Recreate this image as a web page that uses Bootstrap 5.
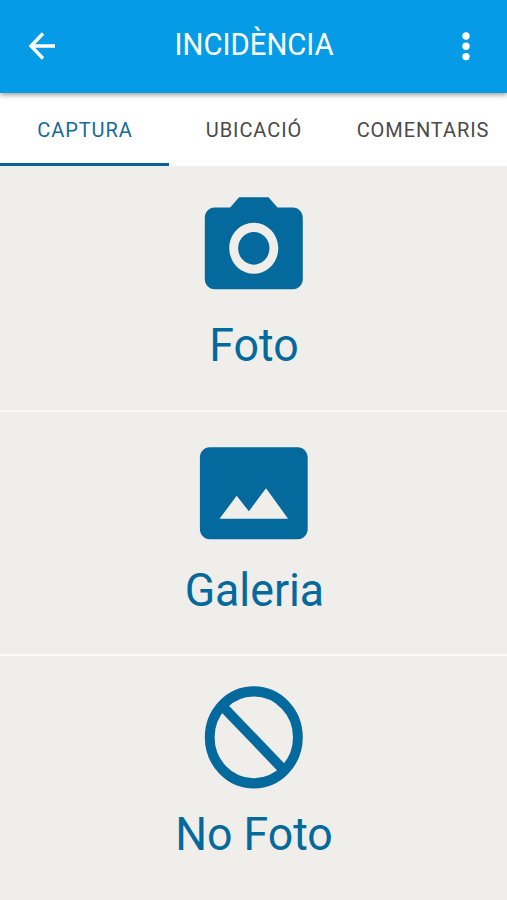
<!DOCTYPE html>
<html lang="ca">
<head>
<meta charset="utf-8">
<meta name="viewport" content="width=device-width, initial-scale=1">
<title>Incidència</title>
<link href="https://cdn.jsdelivr.net/npm/bootstrap@5.3.0/dist/css/bootstrap.min.css" rel="stylesheet">
<style>
body{font-family:Roboto,"Liberation Sans",sans-serif;background:#efeeea;height:900px;overflow:hidden}
.app-bar{height:93px;background:#059be7;box-shadow:0 2px 5px rgba(0,0,0,.38);padding:0 27px 1px;z-index:2}
.app-title{font-size:31px;line-height:36px;color:#fff;transform:scaleX(.945);margin-top:-2px;padding-left:1px}
.tab-strip{height:73px;background:#fff}
.tab-strip .tab-link{height:73px;color:#4a4a4a;font-size:20px;line-height:24px;letter-spacing:.93px;border-bottom:3px solid transparent;padding-top:25px;padding-left:1px;text-decoration:none;flex:1 1 0;text-align:center;white-space:nowrap}
.tab-strip .tab-link.active{color:#17699c;border-bottom-color:#07629a}
.option{height:244px;color:#04699c;padding-top:20.7px;text-decoration:none}
.option + .option{height:244.3px;border-top:2px solid #fbfbfa;padding-top:20px}
.option svg{width:117.6px;height:122.6px;flex-shrink:0}
.option-name{font-size:47px;line-height:56px;transform:scaleX(.95);margin-top:7.500px;padding-left:1px}
</style>
<script src="https://cdn.jsdelivr.net/npm/bootstrap@5.3.0/dist/js/bootstrap.bundle.min.js"></script>
</head>
<body class="d-flex flex-column">
<header class="app-bar d-flex align-items-center justify-content-between position-relative flex-shrink-0">
  <svg width="30" height="30" viewBox="0 0 30 30" fill="none" stroke="#fff" stroke-width="3.4"><path d="M28 15H4M16 2.5L4 15l12 12.500"/></svg>
  <h1 class="app-title fw-normal mb-0">INCIDÈNCIA</h1>
  <svg width="30" height="30" viewBox="0 0 30 30" fill="#fff"><circle cx="16" cy="5" r="3.700"/><circle cx="16" cy="15.300" r="3.700"/><circle cx="16" cy="25.600" r="3.700"/></svg>
</header>
<nav class="tab-strip d-flex flex-shrink-0">
  <a class="tab-link active" href="#">CAPTURA</a>
  <a class="tab-link" href="#">UBICACIÓ</a>
  <a class="tab-link" href="#">COMENTARIS</a>
</nav>
<main class="d-flex flex-column flex-grow-1">
  <a class="option d-flex flex-column align-items-center" href="#">
    <svg viewBox="0 0 24 24" preserveAspectRatio="none" fill="currentColor"><circle cx="12" cy="12" r="3.200"/><path d="M9 2L7.170 4H4c-1.100 0-2 .9-2 2v12c0 1.100.9 2 2 2h16c1.100 0 2-.9 2-2V6c0-1.100-.9-2-2-2h-3.170L15 2H9zm3 15c-2.760 0-5-2.240-5-5s2.240-5 5-5 5 2.240 5 5-2.240 5-5 5z"/></svg>
    <span class="option-name">Foto</span>
  </a>
  <a class="option d-flex flex-column align-items-center" href="#">
    <svg viewBox="0 0 24 24" preserveAspectRatio="none" fill="currentColor"><path d="M23 19V5c0-1.100-.9-2-2-2H3c-1.100 0-2 .9-2 2v14c0 1.100.9 2 2 2h18c1.100 0 2-.9 2-2zM8.500 12.500l2.500 3.010L14.500 11l4.500 6H5l3.500-4.500z"/></svg>
    <span class="option-name">Galeria</span>
  </a>
  <a class="option d-flex flex-column align-items-center" href="#">
    <svg viewBox="0 0 24 24" preserveAspectRatio="none" fill="none" stroke="currentColor" stroke-width="2"><circle cx="12" cy="12" r="9"/><path d="M5 5.300L18.700 19"/></svg>
    <span class="option-name">No Foto</span>
  </a>
</main>
</body>
</html>
